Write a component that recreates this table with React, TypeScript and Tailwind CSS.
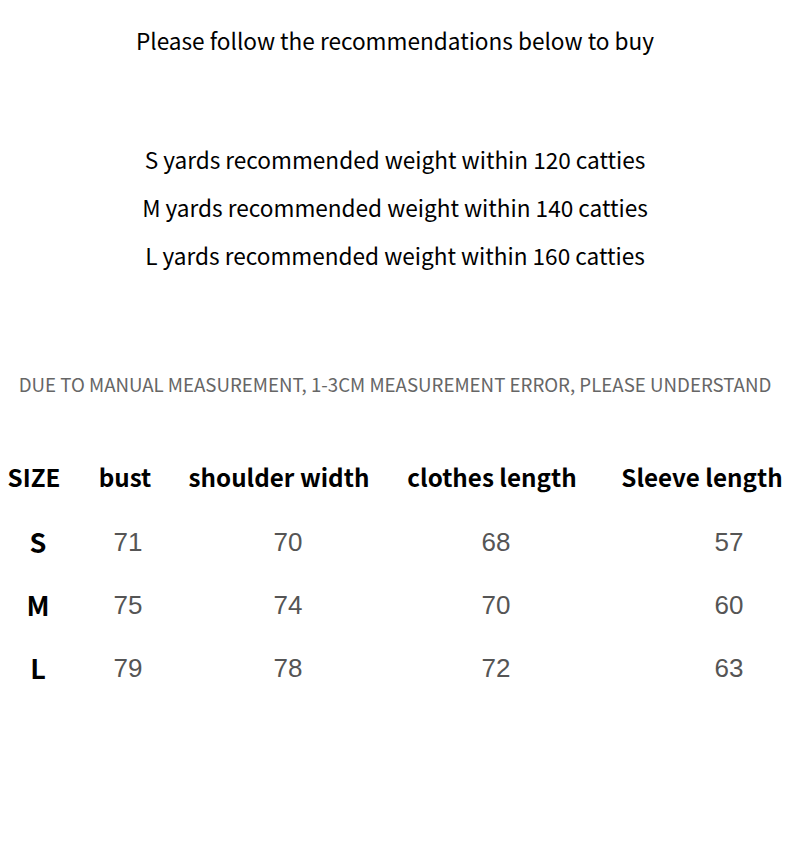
const cjk = { fontFamily: '"Noto Sans CJK SC", "Noto Sans", sans-serif' };
const num = { fontFamily: '"Liberation Sans", Arial, sans-serif' };

const weights = [
  "S yards recommended weight within 120 catties",
  "M yards recommended weight within 140 catties",
  "L yards recommended weight within 160 catties",
];

const headers = ["SIZE", "bust", "shoulder width", "clothes length", "Sleeve length"];

const rows = [
  { size: "S", values: ["71", "70", "68", "57"] },
  { size: "M", values: ["75", "74", "70", "60"] },
  { size: "L", values: ["79", "78", "72", "63"] },
];

export default function App() {
  return (
    <div className="h-[845px] w-[790px] overflow-hidden bg-white text-black" style={cjk}>
      {/* Intro */}
      <p className="pt-[25px] text-center text-[22.6px] leading-[32px]">
        Please follow the recommendations below to buy
      </p>

      <div className="mt-[79px] flex flex-col items-center">
        {weights.map((w) => (
          <p key={w} className="text-[22.6px] leading-[48px]">
            {w}
          </p>
        ))}
      </div>

      <p className="mt-[91px] text-center text-[18.7px] leading-[26px] text-[#666]">
        DUE TO MANUAL MEASUREMENT, 1-3CM MEASUREMENT ERROR, PLEASE UNDERSTAND
      </p>

      {/* Size table */}
      <div className="mt-[63px] grid grid-cols-[68px_114px_194px_232px_1fr] text-[24.2px] font-bold leading-[34px]">
        {headers.map((h, i) => (
          <div key={h} className={`text-center whitespace-nowrap ${i === 4 ? "pl-[6px]" : ""}`}>
            {h}
          </div>
        ))}
      </div>

      <div className="mt-[17px] flex flex-col">
        {rows.map((r) => (
          <div key={r.size} className="grid h-[63px] grid-cols-[76px_104px_216px_200px_1fr] items-center">
            <div className="text-center text-[27px] font-bold">{r.size}</div>
            {r.values.map((v, i) => (
              <div
                key={i}
                className={`text-center text-[26px] text-[#555] ${i === 3 ? "pl-[72px]" : ""}`}
                style={num}
              >
                {v}
              </div>
            ))}
          </div>
        ))}
      </div>
    </div>
  );
}
